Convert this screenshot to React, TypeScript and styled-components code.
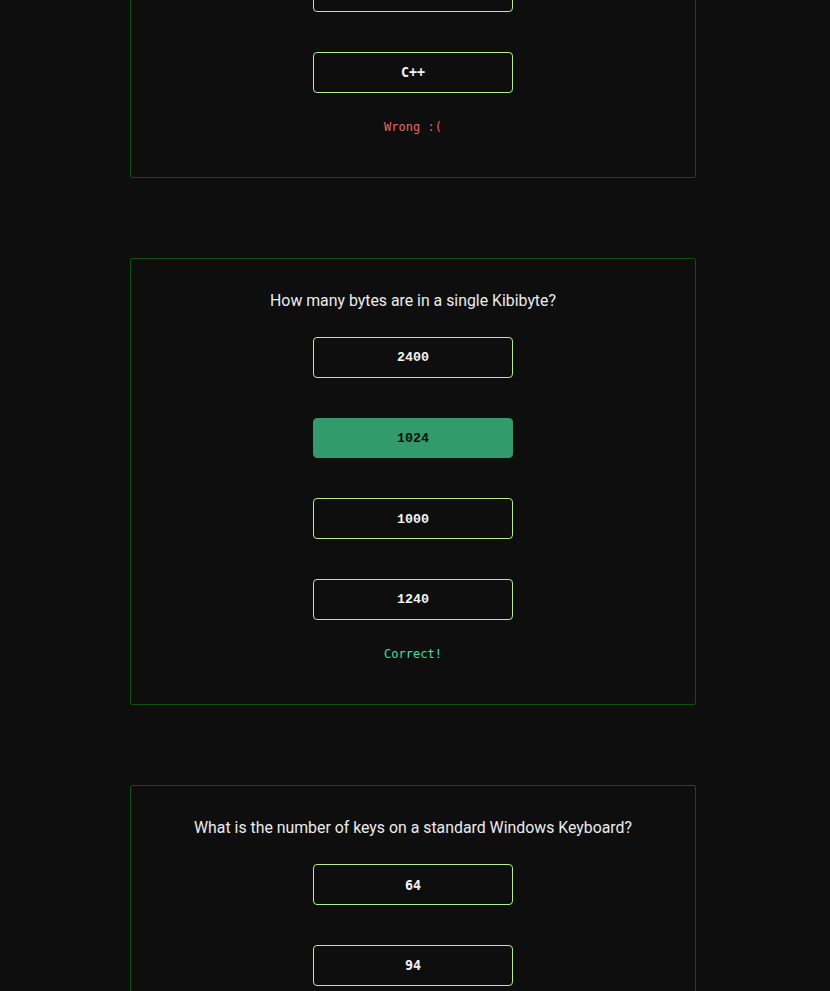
import React from "react";
import styled, { createGlobalStyle } from "styled-components";

const GlobalStyle = createGlobalStyle`
  html, body {
    margin: 0;
    padding: 0;
    background: #0e0e0e;
  }
  body {
    overflow: hidden;
  }
`;

const Page = styled.div`
  display: flex;
  flex-direction: column;
  align-items: center;
  gap: 80px;
  padding-right: 4px;
  margin-top: -269px;
  padding-bottom: 80px;
`;

const Card = styled.section`
  width: 566px;
  box-sizing: border-box;
  border: 1px solid #0b530b;
  border-radius: 2px;
  padding: 30px 0 42px;
  display: flex;
  flex-direction: column;
  align-items: center;
`;

const Question = styled.h2`
  margin: 0 0 24px;
  font-family: Roboto, "Noto Sans", sans-serif;
  font-weight: 400;
  font-size: 15.85px;
  line-height: 24px;
  color: #ececec;
  text-align: center;
`;

const Answers = styled.div`
  display: flex;
  flex-direction: column;
  gap: 40px;
`;

const Answer = styled.button<{ $picked?: boolean; $mono: string }>`
  width: 200px;
  height: 40.67px;
  box-sizing: border-box;
  padding: 1px 0 0;
  border: 1px solid ${(p) => (p.$picked ? "#339a6b" : "#b6ef8a")};
  border-radius: 4px;
  background: ${(p) => (p.$picked ? "#339a6b" : "#0e0e0e")};
  color: ${(p) => (p.$picked ? "#0e0e0e" : "#f4f4f4")};
  font-family: ${(p) => p.$mono};
  font-weight: 700;
  font-size: 13.333px;
  cursor: pointer;
`;

const Result = styled.p<{ $ok: boolean }>`
  margin: 26.5px 0 0;
  font-family: "DejaVu Sans Mono", monospace;
  font-size: 12px;
  line-height: 16px;
  color: ${(p) => (p.$ok ? "#3ee0a2" : "#e46868")};
`;

type Quiz = {
  question: string;
  answers: string[];
  picked?: number;
  result?: "ok" | "bad";
  font: string;
};

const quizzes: Quiz[] = [
  {
    question: "Which language is the Linux kernel mostly written in?",
    answers: ["Python", "Java", "C", "C++"],
    result: "bad",
    font: '"DejaVu Sans Mono", monospace',
  },
  {
    question: "How many bytes are in a single Kibibyte?",
    answers: ["2400", "1024", "1000", "1240"],
    picked: 1,
    result: "ok",
    font: '"Liberation Mono", monospace',
  },
  {
    question: "What is the number of keys on a standard Windows Keyboard?",
    answers: ["64", "94", "101", "104"],
    font: '"DejaVu Sans Mono", monospace',
  },
];

const App: React.FC = () => {
  return (
    <>
      <GlobalStyle />
      <Page>
        {quizzes.map((q) => (
          <Card key={q.question}>
            <Question>{q.question}</Question>
            <Answers>
              {q.answers.map((a, i) => (
                <Answer key={a} $picked={q.picked === i} $mono={q.font}>
                  {a}
                </Answer>
              ))}
            </Answers>
            {q.result && (
              <Result $ok={q.result === "ok"}>
                {q.result === "ok" ? "Correct!" : "Wrong :("}
              </Result>
            )}
          </Card>
        ))}
      </Page>
    </>
  );
};

export default App;
